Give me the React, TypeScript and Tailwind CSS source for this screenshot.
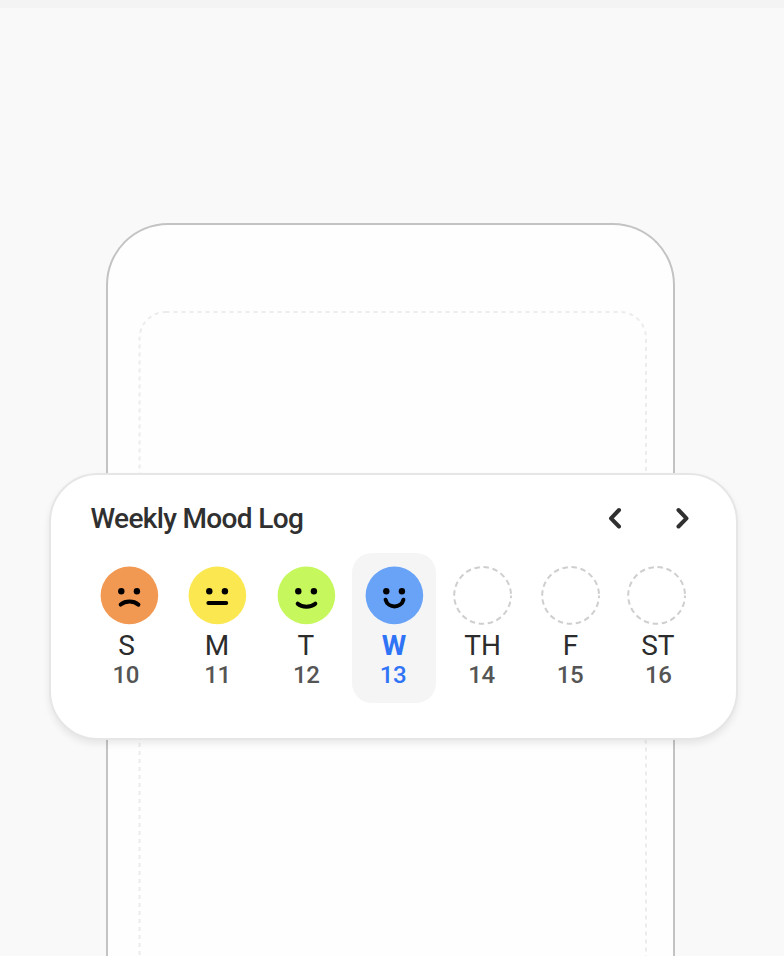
import React from "react";

type Mood = "sad" | "neutral" | "content" | "happy";

interface Day {
  label: string;
  date: string;
  mood?: Mood;
  selected?: boolean;
  columnClass?: string;
  labelClass?: string;
  dateClass?: string;
}

const days: Day[] = [
  { label: "S", date: "10", mood: "sad", labelClass: "-translate-x-[2.5px]", dateClass: "-translate-x-[3.3px]" },
  { label: "M", date: "11", mood: "neutral", labelClass: "-translate-x-[0.5px]", dateClass: "" },
  { label: "T", date: "12", mood: "content", dateClass: "translate-x-[0.5px]" },
  { label: "W", date: "13", mood: "happy", selected: true, labelClass: "-translate-x-[0.2px]", dateClass: "-translate-x-[1.2px]" },
  { label: "TH", date: "14", dateClass: "-translate-x-[1px]" },
  { label: "F", date: "15", labelClass: "-translate-x-[0.4px]", dateClass: "-translate-x-[1px]" },
  { label: "ST", date: "16", columnClass: "-ml-[2px]", labelClass: "translate-x-[0.5px]", dateClass: "translate-x-[1px]" },
];

const faces: Record<Mood, { fill: string; mouth: string }> = {
  sad: { fill: "#f19953", mouth: "M20.3 38.2C25 34.2 33.2 34.2 38 38.2" },
  neutral: { fill: "#fbe74f", mouth: "M20 36.7H37.8" },
  content: { fill: "#c6f75c", mouth: "M20.3 37.3C24.5 41.2 33.5 41.2 37.9 37.3" },
  happy: { fill: "#69a3f8", mouth: "M20.2 33.3C22.5 42.2 35.8 42.2 38 33.3" },
};

function MoodFace({ mood }: { mood?: Mood }) {
  if (!mood) {
    return (
      <svg className="block size-[60px]" viewBox="-0.6 -0.4 60 60" fill="none">
        <circle cx="29" cy="29" r="28.4" stroke="#cfcfcf" strokeWidth="2" strokeDasharray="5.5 3.65" strokeDashoffset="2.75" />
      </svg>
    );
  }
  const face = faces[mood];
  return (
    <svg className="block size-[60px]" viewBox="-1.4 -0.4 60 60" fill="none">
      <circle cx="29" cy="29" r="28.8" fill={face.fill} />
      <circle cx="20.9" cy="24.8" r="3.2" fill="#000" />
      <circle cx="36.5" cy="24.8" r="3.2" fill="#000" />
      <path d={face.mouth} stroke="#000" strokeWidth="4" strokeLinecap="round" />
    </svg>
  );
}

function DayColumn({ day }: { day: Day }) {
  return (
    <div
      className={`flex h-[150.5px] w-[84px] shrink-0 flex-col items-center rounded-[20px] pt-[13px] ${
        day.selected ? "bg-[#f5f5f5]" : ""
      } ${day.columnClass ?? ""}`}
    >
      <MoodFace mood={day.mood} />
      <span
        className={`mt-[5px] text-[28px] leading-[30px] ${
          day.selected ? "font-bold text-[#2f73f6]" : "font-normal text-[#2c2c2c]"
        } ${day.labelClass ?? ""}`}
      >
        {day.label}
      </span>
      <span
        className={`text-[24px] leading-[28px] font-medium tracking-[-0.4px] ${
          day.selected ? "text-[#2f73f6]" : "text-[#555555]"
        } ${day.dateClass ?? ""}`}
      >
        {day.date}
      </span>
    </div>
  );
}

export default function App() {
  return (
    <div className="relative h-[956px] w-[784px] overflow-hidden border-t-8 border-[#f4f4f4] bg-[#f9f9f9] pt-[215px] font-['Roboto',sans-serif]">
      <div className="ml-[106px] h-[800px] w-[569px] rounded-t-[62px] border-2 border-b-0 border-[#c3c3c3] bg-[#fefefe]">
        <svg className="block h-[731px] w-[565px]" viewBox="0 0 565 731" fill="none">
          <rect x="31.6" y="87" width="506.4" height="330" rx="26" stroke="#ececec" strokeWidth="2" strokeDasharray="4 4" />
          <rect x="31.6" y="490" width="506.4" height="400" rx="30" stroke="#ececec" strokeWidth="2" strokeDasharray="4 4" />
        </svg>
      </div>

      <section className="absolute top-[465px] left-[49px] h-[267px] w-[689px] rounded-[49px] border-2 border-[#e6e6e6] bg-white shadow-[0_4px_7px_rgba(0,0,0,0.08)]">
        <header className="flex h-[77.5px] items-start justify-between pt-[27px] pr-[46px] pl-[39.5px]">
          <h1 className="text-[28px] leading-[33px] font-medium tracking-[-0.66px] text-[#303030]">Weekly Mood Log</h1>
          <nav className="flex gap-[53px] pt-[5px]">
            <button aria-label="Previous week">
              <svg className="block h-[22px] w-[15px]" viewBox="0 0 15 22" fill="none">
                <path d="M12 3L4 11.3L12 19.5" stroke="#303030" strokeWidth="4" strokeLinecap="round" strokeLinejoin="round" />
              </svg>
            </button>
            <button aria-label="Next week">
              <svg className="block h-[22px] w-[15px]" viewBox="0 0 15 22" fill="none">
                <path d="M3.5 3L11.5 11.3L3.5 19.5" stroke="#303030" strokeWidth="4" strokeLinecap="round" strokeLinejoin="round" />
              </svg>
            </button>
          </nav>
        </header>
        <div className="flex gap-[4.4px] pl-[36px]">
          {days.map((day) => (
            <DayColumn key={day.label} day={day} />
          ))}
        </div>
      </section>
    </div>
  );
}
